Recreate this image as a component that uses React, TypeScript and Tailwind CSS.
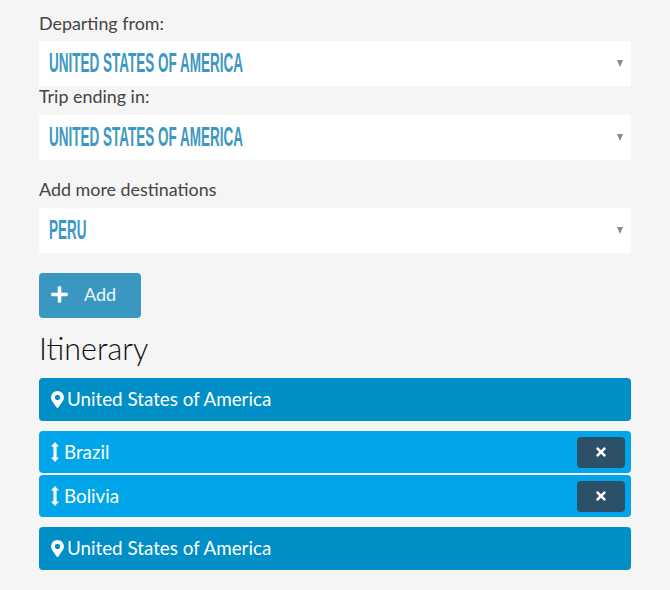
import { FaMapMarkerAlt, FaPlus, FaTimes } from 'react-icons/fa'

const labelFont = "font-['Lato',sans-serif]"

function UpDownIcon() {
  return (
    <svg width="8" height="20" viewBox="0 0 8 20" fill="currentColor">
      <path d="M4 0 8 4.6H5.6V15.4H8L4 20 0 15.4H2.4V4.6H0Z" />
    </svg>
  )
}

function FakeSelect({ value }: { value: string }) {
  return (
    <div className="flex h-[45px] items-center justify-between bg-white pl-[10px] pr-[8px]">
      <span className="inline-block origin-left scale-x-[0.5] whitespace-nowrap pb-[1px] font-['Liberation_Sans',sans-serif] text-[27px] font-bold text-[#3c98c2]">
        {value}
      </span>
      <span className="h-0 w-0 border-x-[3.5px] border-t-[7px] border-x-transparent border-t-[#8a8a8a]" />
    </div>
  )
}

function EndRow({ name }: { name: string }) {
  return (
    <div className="flex h-[43px] items-center gap-[3px] rounded-[4px] bg-[#008fc7] pl-[12px] text-white">
      <FaMapMarkerAlt className="h-[17px] w-[13px]" />
      <span className="text-[18.8px]">{name}</span>
    </div>
  )
}

function StopRow({ name }: { name: string }) {
  return (
    <div className="flex h-[42px] items-center justify-between rounded-[4px] bg-[#00a6e9] pl-[12px] pr-[6px] text-white">
      <div className="flex items-center gap-[5px]">
        <UpDownIcon />
        <span className="text-[18.8px]">{name}</span>
      </div>
      <button className="flex h-[31px] w-[48px] items-center justify-center rounded-[4px] bg-[#2c5068]">
        <FaTimes size={14} />
      </button>
    </div>
  )
}

export default function App() {
  return (
    <div className={`h-[590px] w-[670px] overflow-hidden bg-[#f5f5f5] pl-[39px] pr-[39px] ${labelFont}`}>
      <p className="pt-[13px] text-[17.9px] leading-[20px] text-[#444]">Departing from:</p>
      <div className="mt-[8px]">
        <FakeSelect value="UNITED STATES OF AMERICA" />
      </div>
      <p className="text-[17.9px] leading-[20px] text-[#444]">Trip ending in:</p>
      <div className="mt-[9px]">
        <FakeSelect value="UNITED STATES OF AMERICA" />
      </div>
      <p className="mt-[19px] text-[17.9px] leading-[20px] text-[#444]">Add more destinations</p>
      <div className="mt-[9px]">
        <FakeSelect value="PERU" />
      </div>
      <button className="mt-[20px] flex h-[45px] w-[102px] items-center rounded-[4px] bg-[#3a97c1] pb-[2px] pl-[11px] text-white">
        <FaPlus size={19} />
        <span className="ml-[15px] text-[18px] text-white/90">Add</span>
      </button>
      <h2 className="mt-[10px] text-[30.5px] font-light leading-[40px] text-[#111]">Itinerary</h2>
      <div className="mt-[10px]">
        <EndRow name="United States of America" />
      </div>
      <div className="mt-[10px] flex flex-col gap-[2px]">
        <StopRow name="Brazil" />
        <StopRow name="Bolivia" />
      </div>
      <div className="mt-[10px]">
        <EndRow name="United States of America" />
      </div>
    </div>
  )
}
